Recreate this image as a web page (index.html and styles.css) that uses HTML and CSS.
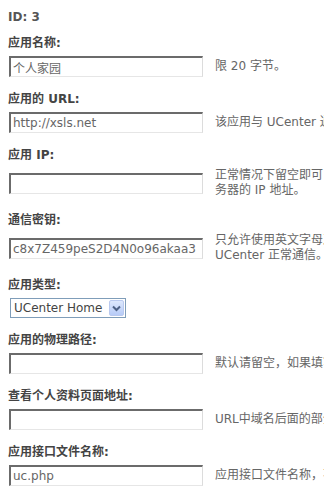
FILE: index.html
```html
<!DOCTYPE html>
<html lang="zh-CN">
<head>
<meta charset="utf-8">
<title>编辑应用</title>
<link rel="stylesheet" href="styles.css">
</head>
<body>
<div class="form">
  <div class="id">ID: 3</div>

  <div class="label">应用名称:</div>
  <div class="row">
    <div class="field"><input class="txt" type="text" value="个人家园"></div>
    <div class="desc">限 20 字节。</div>
  </div>

  <div class="label">应用的 URL:</div>
  <div class="row">
    <div class="field"><input class="txt" type="text" value="http://xsls.net"></div>
    <div class="desc">该应用与 UCenter 通信的接口 URL，结尾请不要加“/”，应用的通知只发送给主 URL 地址。</div>
  </div>

  <div class="label">应用 IP:</div>
  <div class="row">
    <div class="field"><input class="txt" type="text" value=""></div>
    <div class="desc">正常情况下留空即可，如果由于域名解析问题导致 UCenter 与该应用通信失败，请尝试设置为该应用所在服务器的 IP 地址。</div>
  </div>

  <div class="label">通信密钥:</div>
  <div class="row">
    <div class="field"><input class="txt" type="text" value="c8x7Z459peS2D4N0o96akaa3"></div>
    <div class="desc">只允许使用英文字母及数字，限 64 字节。应用端的通信密钥必须与此设置保持一致，否则该应用将无法与 UCenter 正常通信。</div>
  </div>

  <div class="label">应用类型:</div>
  <div class="row">
    <div class="select">
      <span class="select-text">UCenter Home</span>
      <span class="select-btn"><svg width="9" height="7" viewBox="0 0 9 7"><path d="M1 1.5 L4.5 5 L8 1.5" fill="none" stroke="#4d6185" stroke-width="2"/></svg></span>
    </div>
  </div>

  <div class="label">应用的物理路径:</div>
  <div class="row">
    <div class="field"><input class="txt" type="text" value=""></div>
    <div class="desc">默认请留空，如果填写的为相对路径，程序会自动转换为绝对路径。</div>
  </div>

  <div class="label">查看个人资料页面地址:</div>
  <div class="row">
    <div class="field"><input class="txt" type="text" value=""></div>
    <div class="desc">URL中域名后面的部分，如：/space.php?uid=%s</div>
  </div>

  <div class="label">应用接口文件名称:</div>
  <div class="row">
    <div class="field"><input class="txt" type="text" value="uc.php"></div>
    <div class="desc">应用接口文件名称，不含路径，默认为uc.php</div>
  </div>
</div>
</body>
</html>
```

FILE: styles.css
```css
html {
  overflow: hidden;
  background: #fff;
}
body {
  margin: 0;
  font-family: "DejaVu Sans", Verdana, "Noto Sans CJK SC", sans-serif;
  font-size: 12px;
  color: #666;
}
.form {
  width: 820px;
  padding-left: 8px;
}
.id {
  padding-top: 10px;
  line-height: 15px;
  font-weight: bold;
  color: #555;
}
.label {
  padding-top: 9px;
  line-height: 18px;
  font-weight: bold;
  color: #444;
}
.row {
  display: flex;
  align-items: center;
  padding: 4px 0;
}
.field {
  width: 207px;
  flex: none;
}
.txt {
  box-sizing: border-box;
  width: 194px;
  height: 21px;
  margin: 0 0 0 1px;
  padding: 0 2px;
  border-top: 2px solid #6b6b6b;
  border-left: 2px solid #6b6b6b;
  border-right: 1px solid #dcdcdc;
  border-bottom: 1px solid #e6e6e6;
  background: #fff;
  font-family: "DejaVu Sans", Verdana, "Noto Sans CJK SC", sans-serif;
  font-size: 12px;
  color: #666;
  outline: none;
}
.desc {
  width: 578px;
  line-height: 15px;
  color: #666;
}
.select {
  box-sizing: border-box;
  display: flex;
  align-items: center;
  justify-content: space-between;
  width: 116px;
  height: 20px;
  margin-left: 2px;
  padding: 1px;
  border: 1px solid #7f9db9;
  background: #fff;
}
.select-text {
  padding-left: 2px;
  font-family: "DejaVu Sans", Verdana, sans-serif;
  font-size: 12px;
  color: #444;
  white-space: nowrap;
}
.select-btn {
  display: flex;
  align-items: center;
  justify-content: center;
  width: 15px;
  height: 16px;
  box-sizing: border-box;
  border: 1px solid #b9c9ef;
  border-radius: 2px;
  background: linear-gradient(#dde8fd, #b7cbf7);
}
```
